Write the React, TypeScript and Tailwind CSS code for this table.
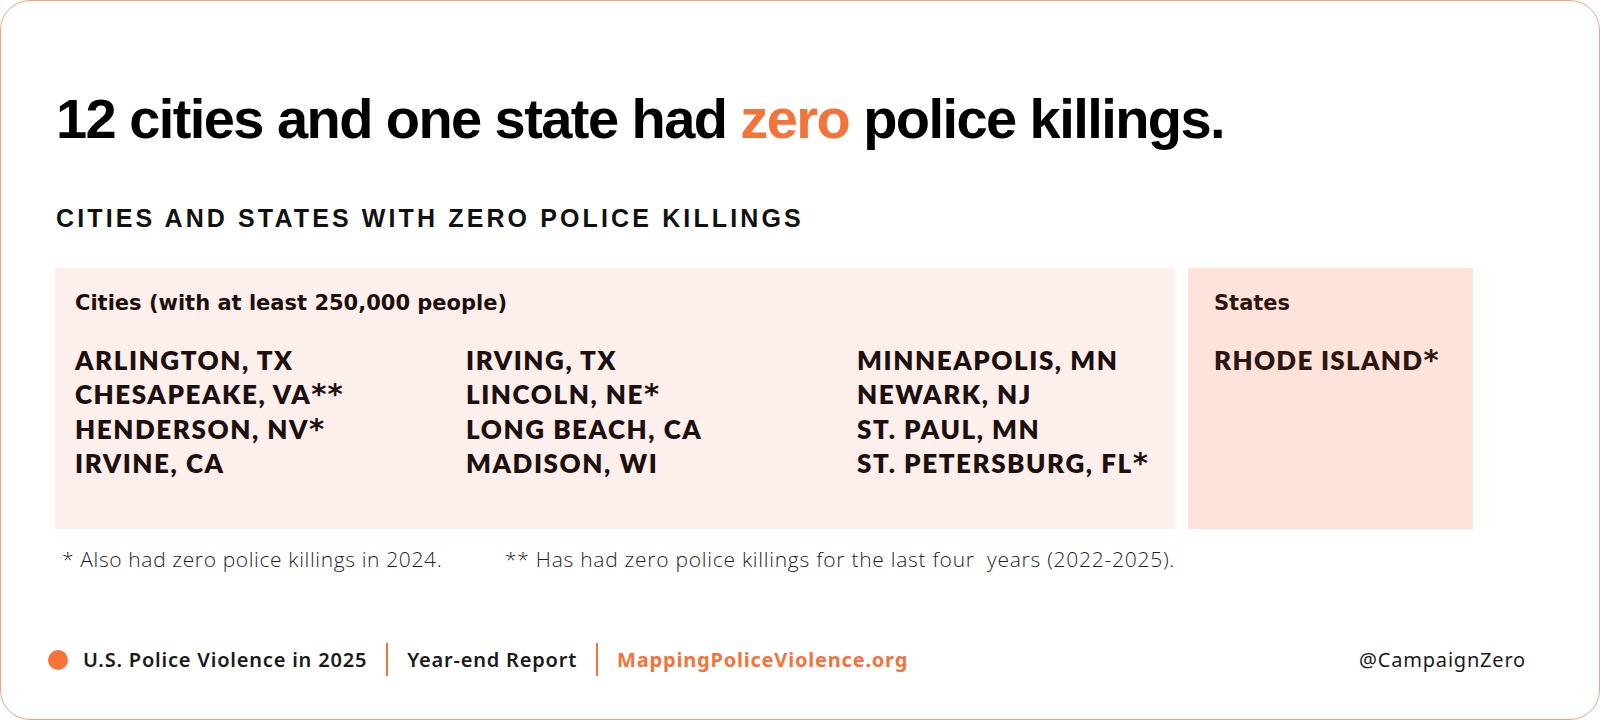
import React from "react";

const cities: string[][] = [
  ["ARLINGTON, TX", "CHESAPEAKE, VA**", "HENDERSON, NV*", "IRVINE, CA"],
  ["IRVING, TX", "LINCOLN, NE*", "LONG BEACH, CA", "MADISON, WI"],
  ["MINNEAPOLIS, MN", "NEWARK, NJ", "ST. PAUL, MN", "ST. PETERSBURG, FL*"],
];

function Name({ text }: { text: string }) {
  const m = text.match(/^(.*?)(\**)$/);
  const base = m ? m[1] : text;
  const stars = m ? m[2] : "";
  return (
    <>
      {base}
      {stars && (
        <span className="[font-family:'DejaVu_Sans',sans-serif] font-bold text-[29px] tracking-[0.04em]">{stars}</span>
      )}
    </>
  );
}

export default function App() {
  return (
    <div className="w-[1600px] h-[720px] bg-white">
      <div className="w-[1600px] h-[720px] border border-[#F5A283] rounded-[30px] bg-white pl-[55px] pt-[90px] flex flex-col box-border overflow-hidden">
        <h1 className="[font-family:'Liberation_Sans',Arial,sans-serif] font-bold text-[56px] leading-[56px] tracking-[-0.028em] text-black">
          12 cities and one state had <span className="text-[#F4733A]">zero</span> police killings.
        </h1>
        <h2 className="mt-[59px] [font-family:'Liberation_Sans',Arial,sans-serif] font-bold text-[25px] leading-[25px] tracking-[0.125em] text-[#111]">
          CITIES AND STATES WITH ZERO POLICE KILLINGS
        </h2>
        <div className="mt-[37px] -ml-[1px] flex gap-[13px]">
          <div className="w-[1120px] h-[261px] bg-[#FDEFEB] pl-[20px] pt-[25px]">
            <div className="[font-family:'DejaVu_Sans',sans-serif] font-bold text-[21px] leading-[21px] text-[#1C0F0D]">
              Cities (with at least 250,000 people)
            </div>
            <div className="mt-[29px] grid grid-cols-[391px_391px_1fr] [font-family:Lato,'Liberation_Sans',sans-serif]">
              {cities.map((col, i) => (
                <div key={i} className="flex flex-col">
                  {col.map((c) => (
                    <div
                      key={c}
                      className="font-extrabold text-[26px] leading-[34.3px] tracking-[0.06em] text-[#1C0F0D] whitespace-nowrap"
                    >
                      <Name text={c} />
                    </div>
                  ))}
                </div>
              ))}
            </div>
          </div>
          <div className="w-[285px] h-[261px] bg-[#FDE3D9] pl-[26px] pt-[25px]">
            <div className="[font-family:'DejaVu_Sans',sans-serif] font-bold text-[21px] leading-[21px] text-[#2E1610]">States</div>
            <div className="mt-[29px] [font-family:Lato,'Liberation_Sans',sans-serif] font-extrabold text-[26px] leading-[34.3px] tracking-[0.05em] text-[#2E1610] whitespace-nowrap">
              <Name text="RHODE ISLAND*" />
            </div>
          </div>
        </div>
        <div className="mt-[20px] ml-[6px] flex [font-family:'Open_Sans','Noto_Sans',sans-serif] font-light text-[21px] leading-[21px] text-[#1f1f1f]">
          <div className="w-[443px] whitespace-nowrap tracking-[0.03em]">* Also had zero police killings in 2024.</div>
          <div className="whitespace-nowrap tracking-[0.035em]">** Has had zero police killings for the last four&nbsp; years (2022-2025).</div>
        </div>
        <div className="mt-[73px] -ml-[8px] mr-[73px] flex items-center [font-family:'Noto_Sans','Open_Sans',sans-serif] text-[20px] leading-[24px] tracking-[0.04em]">
          <div className="w-[20px] h-[20px] rounded-full bg-[#F87339] mr-[15px]" />
          <span className="font-semibold text-[#1a1a1a]">U.S. Police Violence in 2025</span>
          <div className="w-[2px] h-[33px] bg-[#F4733A] mx-[19px]" />
          <span className="font-semibold text-[#1a1a1a]">Year-end Report</span>
          <div className="w-[2px] h-[33px] bg-[#F4733A] mx-[19px]" />
          <span className="font-bold text-[#F4733A]">MappingPoliceViolence.org</span>
          <span className="ml-auto text-[#1a1a1a]">@CampaignZero</span>
        </div>
      </div>
    </div>
  );
}
